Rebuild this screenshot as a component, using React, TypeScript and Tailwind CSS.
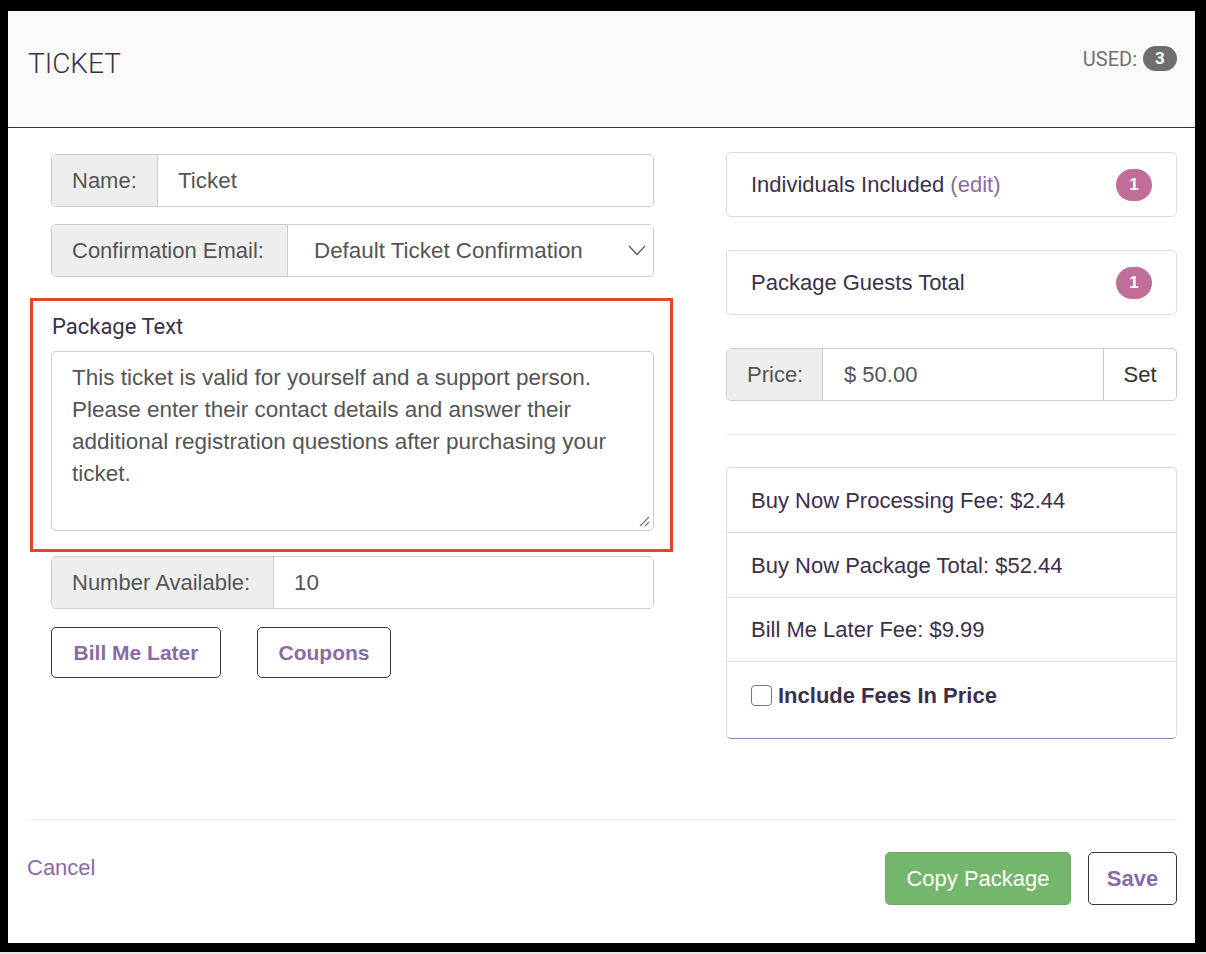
const sans = "font-['Liberation_Sans',Arial,sans-serif]";

function AddonInput({ label, value, addonWidth, select }: { label: string; value: string; addonWidth: string; select?: boolean }) {
  return (
    <div className="flex h-[53px] rounded-[5px] border border-[#cccccc] overflow-hidden">
      <div className={`${addonWidth} shrink-0 flex items-center px-[20px] bg-[#eeeeee] border-r border-[#cccccc] text-[22px] text-[#555555]`}>
        {label}
      </div>
      <div className={`flex-1 flex items-center justify-between ${select ? 'pl-[26px]' : 'pl-[20px]'} pr-[7px] bg-white text-[22.4px] text-[#555555]`}>
        <span>{value}</span>
        {select && (
          <svg width="18" height="11" viewBox="0 0 18 11" fill="none">
            <path d="M1 1 L9 9.5 L17 1" stroke="#555555" strokeWidth="1.2" />
          </svg>
        )}
      </div>
    </div>
  );
}

function CountRow({ children }: { children: React.ReactNode }) {
  return (
    <div className="flex items-center justify-between h-[65px] px-[24px] rounded-[5px] border border-[#dddddd] text-[22px] text-[#3c2f4a]">
      <span>{children}</span>
      <span className="flex items-center justify-center w-[36px] h-[32px] rounded-full bg-[#c06d97] text-white text-[17px] font-bold">1</span>
    </div>
  );
}

export default function App() {
  return (
    <div className={`${sans} w-[1206px] h-[954px] bg-black pt-[11px] pl-[8px] pr-[11px] border-b-2 border-[#e6e6e6]`}>
      <div className="bg-white h-[932px] flex flex-col">
        {/* Header */}
        <div className="h-[117px] shrink-0 bg-[#fafafa] border-b border-[#3d2d4d] flex justify-between pl-[20px] pr-[18px]">
          <h2 className="mt-[39px] text-[28px] leading-[28px] font-light text-[#3c2f4a] font-['Roboto',sans-serif]">TICKET</h2>
          <div className="mt-[35px] flex items-center gap-[6px] h-[25px] font-['Roboto',sans-serif]">
            <span className="text-[20px] text-[#707070]">USED:</span>
            <span className="flex items-center justify-center w-[34px] h-[25px] rounded-full bg-[#6e6e6e] text-white text-[17px] font-bold">3</span>
          </div>
        </div>

        {/* Body */}
        <div className="flex-1 flex pl-[43px] pr-[18px] pt-[24px]">
          <div className="w-[603px] mt-[2px] flex flex-col">
            <AddonInput label="Name:" value="Ticket" addonWidth="w-[106px]" />
            <div className="mt-[17px]">
              <AddonInput label="Confirmation Email:" value="Default Ticket Confirmation" addonWidth="w-[236px]" select />
            </div>

            <div className="mt-[21px] -ml-[21px] -mr-[19px] border-[3px] border-[#e8432b] pl-[18px] pr-[16px] pt-[14px] pb-[18px]">
              <label className="block ml-[1px] text-[22px] leading-[23px] text-[#3c2f4a] font-['Roboto',sans-serif]">Package Text</label>
              <div className="relative mt-[13px] h-[180px] rounded-[5px] border border-[#cccccc] px-[20px] pt-[10px] text-[22.5px] leading-[32px] text-[#555555]">
                This ticket is valid for yourself and a support person. Please enter their contact details and answer their additional registration questions after purchasing your ticket.
                <svg className="absolute right-[3px] bottom-[3px]" width="12" height="12" viewBox="0 0 12 12">
                  <path d="M11 2 L2 11 M11 7 L7 11" stroke="#777777" strokeWidth="1.2" />
                </svg>
              </div>
            </div>

            <div className="mt-[4px]">
              <AddonInput label="Number Available:" value="10" addonWidth="w-[222px]" />
            </div>

            <div className="mt-[18px] flex gap-[36px]">
              <button className="h-[51px] w-[170px] rounded-[5px] border border-[#3c2f4a] text-[21px] font-bold text-[#8b6ba3]">Bill Me Later</button>
              <button className="h-[51px] w-[134px] rounded-[5px] border border-[#3c2f4a] text-[21px] font-bold text-[#8b6ba3]">Coupons</button>
            </div>
          </div>

          <div className="w-[451px] ml-auto flex flex-col">
            <CountRow>
              Individuals Included <span className="text-[#8b6ba3]">(edit)</span>
            </CountRow>
            <div className="mt-[33px]">
              <CountRow>Package Guests Total</CountRow>
            </div>

            <div className="mt-[33px] flex h-[53px] rounded-[5px] border border-[#cccccc] overflow-hidden text-[22px]">
              <div className="w-[96px] shrink-0 flex items-center px-[20px] bg-[#eeeeee] border-r border-[#cccccc] text-[#555555]">Price:</div>
              <div className="flex-1 flex items-center pl-[21px] text-[#555555]">$ 50.00</div>
              <button className="w-[73px] shrink-0 border-l border-[#cccccc] text-[#333333]">Set</button>
            </div>

            <hr className="mt-[33px] border-[#eeeeee]" />

            <div className="mt-[32px] rounded-[5px] border border-[#dddddd] border-b-[#9a7bb0] text-[22px] text-[#3c2f4a]">
              <div className="h-[65px] flex items-center px-[24px] border-b border-[#dddddd]">Buy Now Processing Fee: $2.44</div>
              <div className="h-[65px] flex items-center px-[24px] border-b border-[#dddddd]">Buy Now Package Total: $52.44</div>
              <div className="h-[64px] flex items-center px-[24px] border-b border-[#dddddd]">Bill Me Later Fee: $9.99</div>
              <label className="h-[76px] flex items-start pt-[22px] px-[24px] gap-[6px] font-bold">
                <span className="mt-[1px] w-[21px] h-[21px] rounded-[4px] border-[1.5px] border-[#777777] bg-white" />
                <span className="leading-[24px]">Include Fees In Price</span>
              </label>
            </div>
          </div>
        </div>

        {/* Footer */}
        <div className="h-[124px] shrink-0 ml-[19px] mr-[18px] border-t border-[#eeeeee] flex items-start justify-between">
          <a className="mt-[31px] text-[22px] text-[#8b6ba3]">Cancel</a>
          <div className="mt-[32px] flex gap-[17px]">
            <button className="h-[53px] w-[186px] rounded-[5px] bg-[#74b66b] border border-[#6aac61] text-white text-[22px]">Copy Package</button>
            <button className="h-[53px] w-[89px] rounded-[5px] border border-[#3c2f4a] text-[22px] font-bold text-[#8b6ba3]">Save</button>
          </div>
        </div>
      </div>
    </div>
  );
}
